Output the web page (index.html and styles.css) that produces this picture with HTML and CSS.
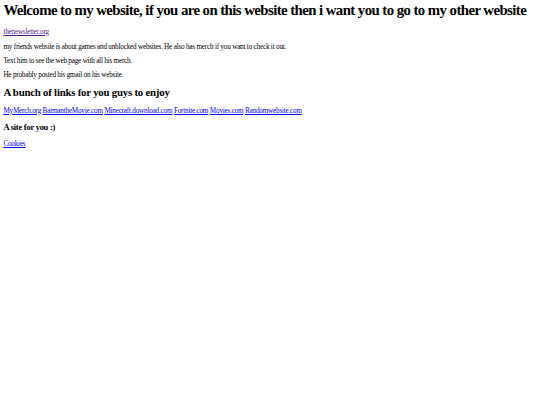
FILE: index.html
```html
<!DOCTYPE html>
<html>
<head>
<meta charset="utf-8">
<title>My website</title>
<link rel="stylesheet" href="styles.css">
</head>
<body class="page">
<h1 class="title">Welcome to my website, if you are on this website then i want you to go to my other website</h1>
<div class="linkrow first"><a class="link visited" href="#">thenewsletter.org</a></div>
<p class="text lead">my friends website is about games and unblocked websites. He also has merch if you want to check it out.</p>
<p class="text">Text him to see the web page with all his merch.</p>
<p class="text">He probably posted his gmail on his website.</p>
<h2 class="subtitle">A bunch of links for you guys to enjoy</h2>
<div class="linkrow links">
<a class="link" href="#">MyMerch.org</a>
<a class="link" href="#">BatmantheMovie.com</a>
<a class="link" href="#">Minecraft.download.com</a>
<a class="link" href="#">Fortnite.com</a>
<a class="link" href="#">Movies.com</a>
<a class="link" href="#">Randomwebsite.com</a>
</div>
<h3 class="minor">A site for you :)</h3>
<div class="linkrow last"><a class="link" href="#">Cookies</a></div>
</body>
</html>
```
FILE: styles.css
```css
html { background: #fff; }
.page {
  margin: 2.1px 3.4px 0;
  font-family: "Liberation Serif", "Times New Roman", serif;
  font-size: 7.2px;
  letter-spacing: -0.03em;
  color: #000;
}
.title { font-size: 14.8px; letter-spacing: -0.038em; margin: 0; font-weight: bold; white-space: nowrap; }
.subtitle { font-size: 10.8px; margin: 6.6px 0 0; font-weight: bold; }
.minor { font-size: 8.42px; margin: 7px 0 0; font-weight: bold; }
.text { margin: 6px 0 0; }
.text.lead { margin-top: 7.5px; }
.linkrow.first { margin-top: 8.8px; }
.linkrow.links { margin-top: 8.8px; }
.linkrow.last { margin-top: 8px; }
.link { color: #0000ee; text-decoration: underline; }
.link.visited { color: #551a8b; }
```
